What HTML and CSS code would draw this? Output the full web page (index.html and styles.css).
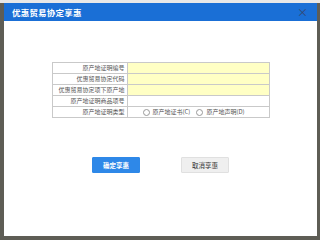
FILE: index.html
```html
<!DOCTYPE html>
<html>
<head>
<meta charset="utf-8">
<link rel="stylesheet" href="styles.css">
</head>
<body>
<div class="screen">
  <div class="dialog">
    <div class="titlebar">
      <span class="title">优惠贸易协定享惠</span>
      <span class="close">×</span>
    </div>
    <div class="content">
      <table class="form">
        <tr><td class="label">原产地证明编号</td><td class="val yellow"></td></tr>
        <tr><td class="label">优惠贸易协定代码</td><td class="val yellow"></td></tr>
        <tr><td class="label">优惠贸易协定项下原产地</td><td class="val yellow"></td></tr>
        <tr><td class="label">原产地证明商品项号</td><td class="val"></td></tr>
        <tr><td class="label">原产地证明类型</td><td class="val">
          <div class="radios">
            <span class="opt"><span class="radio"></span>原产地证书(C)</span>
            <span class="opt"><span class="radio"></span>原产地声明(D)</span>
          </div>
        </td></tr>
      </table>
      <div class="buttons">
        <button class="btn primary">确定享惠</button>
        <button class="btn secondary">取消享惠</button>
      </div>
    </div>
  </div>
</div>
</body>
</html>
```
FILE: styles.css
```css
html, body {
  margin: 0;
  padding: 0;
}
html {
  background: #5e5d55;
}
body {
  width: 100vw;
  height: 100vh;
  min-width: 280px;
  min-height: 204px;
  background: #5e5d55;
  overflow: hidden;
  font-family: "Noto Sans CJK SC", "Noto Sans", sans-serif;
}
.screen {
  padding: 3px 3px 4px 4px;
  height: 100%;
  box-sizing: border-box;
  background: linear-gradient(#e8e8e8 0 3px, #5e5d55 3px);
  display: flex;
  flex-direction: column;
}
.dialog {
  background: #fff;
  flex: 1;
  display: flex;
  flex-direction: column;
}
.titlebar {
  background: #1a6fd6;
  height: 18px;
  display: flex;
  align-items: center;
  justify-content: space-between;
  padding: 0 9px 0 8px;
}
.title {
  color: #fff;
  font-size: 8.5px;
  font-weight: bold;
  letter-spacing: 0.2px;
}
.close {
  color: #34466e;
  font-size: 11px;
  line-height: 1;
}
.content {
  padding-top: 41px;
  display: flex;
  flex-direction: column;
  align-items: center;
}
.form {
  border-collapse: collapse;
  width: 218px;
  font-size: 6px;
  color: #555;
}
.form td {
  border: 1px solid #c9c9c9;
  height: 10px;
  padding: 0;
  line-height: 10px;
}
.label {
  width: 72px;
  text-align: right;
  padding-right: 2px !important;
  white-space: nowrap;
}
.yellow {
  background: #ffffc4;
}
.radios {
  display: flex;
  padding-left: 15px;
  gap: 6px;
}
.opt {
  display: flex;
  align-items: center;
  gap: 3px;
}
.radio {
  width: 5px;
  height: 5px;
  border: 1px solid #999;
  border-radius: 50%;
  background: #fff;
}
.buttons {
  display: flex;
  padding-top: 39px;
  gap: 41px;
}
.btn {
  width: 48px;
  height: 16px;
  font-family: inherit;
  font-size: 6.5px;
  padding: 0;
  border-radius: 1px;
  cursor: pointer;
}
.primary {
  background: #2e88e8;
  color: #fff;
  border: 1px solid #2e88e8;
  font-weight: bold;
}
.secondary {
  background: #efefef;
  color: #333;
  border: 1px solid #e0e0e0;
}
```
